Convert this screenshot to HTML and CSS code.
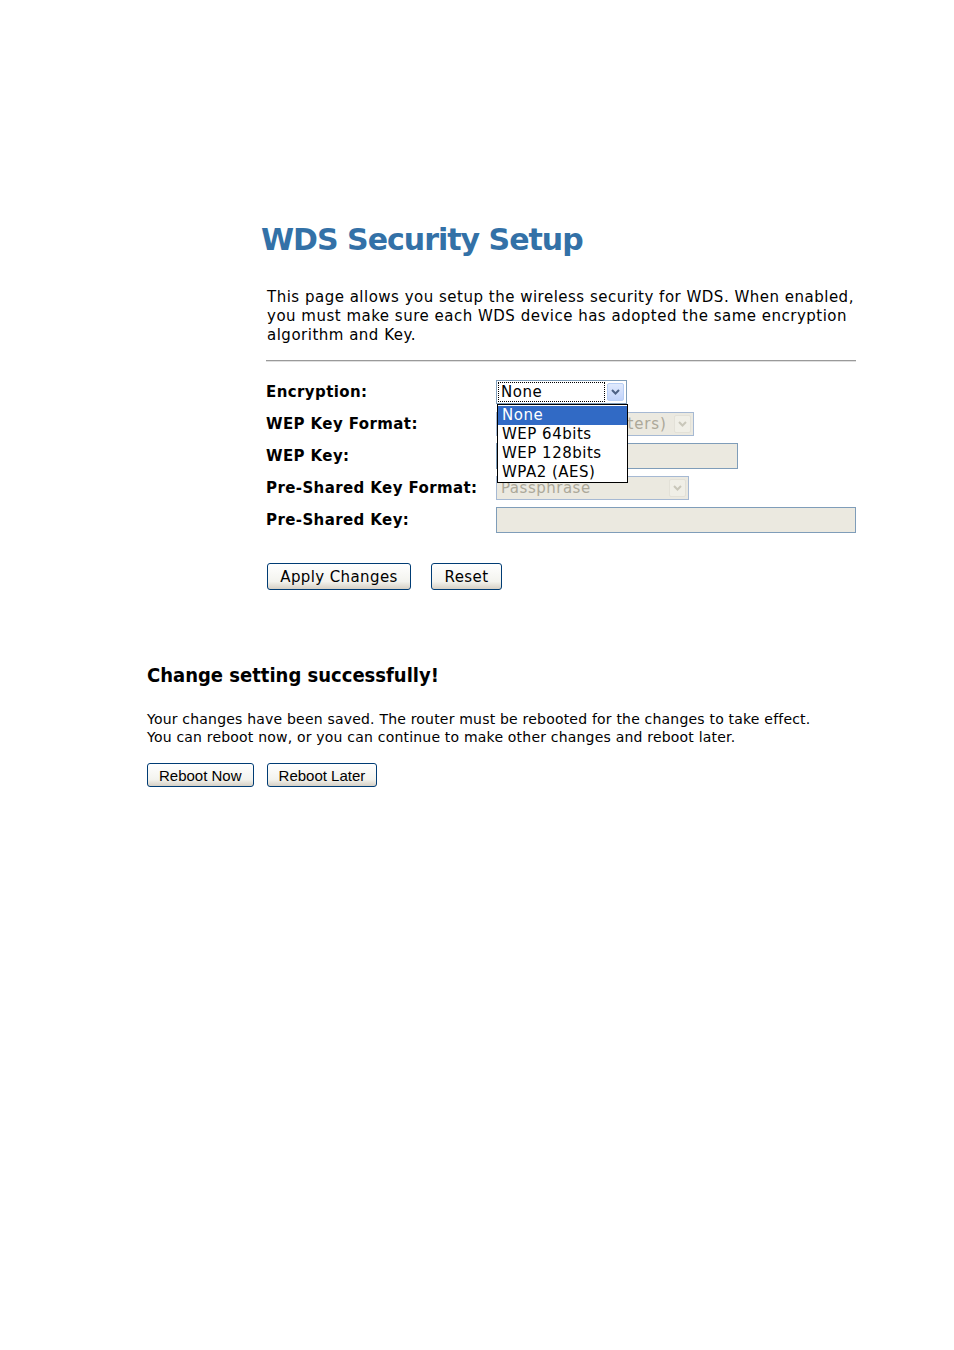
FILE: index.html
```html
<!DOCTYPE html>
<html>
<head>
<meta charset="utf-8">
<link rel="stylesheet" href="styles.css">
</head>
<body>
<div class="page">
  <section class="setup">
    <h1 class="title">WDS Security Setup</h1>
    <p class="intro">This page allows you setup the wireless security for WDS. When enabled, you must make sure each WDS device has adopted the same encryption algorithm and Key.</p>
    <div class="rule"></div>
    <div class="form">
      <div class="label">Encryption:</div>
      <div class="field">
        <div class="select enc">
          <span class="value focus">None</span>
          <span class="arrow"><svg width="9" height="6" viewBox="0 0 9 6"><path d="M1 1 L4.5 4.5 L8 1" fill="none" stroke="#4d6185" stroke-width="2"/></svg></span>
          <div class="menu">
            <div class="opt sel">None</div>
            <div class="opt">WEP 64bits</div>
            <div class="opt">WEP 128bits</div>
            <div class="opt">WPA2 (AES)</div>
          </div>
        </div>
      </div>
      <div class="label">WEP Key Format:</div>
      <div class="field">
        <div class="select disabled wepfmt">
          <span class="value">ASCII (5 characters)</span>
          <span class="arrow"><svg width="9" height="6" viewBox="0 0 9 6"><path d="M1 1 L4.5 4.5 L8 1" fill="none" stroke="#c9c7ba" stroke-width="2"/></svg></span>
        </div>
      </div>
      <div class="label">WEP Key:</div>
      <div class="field"><div class="input disabled wepkey"></div></div>
      <div class="label">Pre-Shared Key Format:</div>
      <div class="field">
        <div class="select disabled pskfmt">
          <span class="value">Passphrase</span>
          <span class="arrow"><svg width="9" height="6" viewBox="0 0 9 6"><path d="M1 1 L4.5 4.5 L8 1" fill="none" stroke="#c9c7ba" stroke-width="2"/></svg></span>
        </div>
      </div>
      <div class="label">Pre-Shared Key:</div>
      <div class="field"><div class="input disabled pskkey"></div></div>
    </div>
    <div class="buttons">
      <button class="btn apply">Apply Changes</button>
      <button class="btn reset">Reset</button>
    </div>
  </section>
  <section class="result">
    <h2 class="result-title">Change setting successfully!</h2>
    <p class="result-text">Your changes have been saved. The router must be rebooted for the changes to take effect.<br>You can reboot now, or you can continue to make other changes and reboot later.</p>
    <div class="buttons2">
      <button class="btn2">Reboot Now</button>
      <button class="btn2">Reboot Later</button>
    </div>
  </section>
</div>
</body>
</html>
```
FILE: styles.css
```css
html, body { margin: 0; padding: 0; background: #fff; }
body { font-family: "DejaVu Sans", Verdana, sans-serif; color: #000; }
.page { padding-top: 220px; }
.setup { margin-left: 261px; width: 595px; }
.title { margin: 0; font-size: 30px; font-weight: bold; color: #3371a7; line-height: 40px; letter-spacing: -1px; }
.intro { margin: 28px 0 0 6px; font-size: 15px; line-height: 19px; letter-spacing: 0.5px; }
.rule { margin: 15px 0 0 5px; height: 0; border-top: 1px solid #9a9a9a; border-bottom: 1px solid #e0e0e0; }
.form { margin: 14px 0 0 5px; display: grid; grid-template-columns: 230px 1fr; grid-auto-rows: 32px; align-items: center; }
.label { font-size: 15px; font-weight: bold; letter-spacing: 0.4px; }
.field { position: relative; height: 100%; display: flex; align-items: center; }
.select { position: relative; box-sizing: border-box; height: 24px; border: 1px solid #7f9db9; background: #fff; display: flex; align-items: center; font-size: 15px; }
.select .value { flex: 1; padding-left: 4px; white-space: nowrap; overflow: hidden; line-height: 20px; letter-spacing: 0.5px; }
.select .value.focus { margin: 1px 2px 1px 1px; padding-left: 3px; outline: 1px dotted #000; outline-offset: -1px; }
.wepfmt .value { letter-spacing: 0.8px; }
.arrow { width: 17px; height: 18px; margin-right: 2px; box-sizing: border-box; border: 1px solid #b8cff5; border-radius: 2px; background: linear-gradient(#e0eafd, #c1d3fb); display: flex; align-items: center; justify-content: center; flex: none; }
.enc { width: 131px; }
.wepfmt { width: 198px; }
.pskfmt { width: 193px; }
.disabled { background: #ebe9e0; color: #aca899; border-color: #a6b9d3; }
.disabled .arrow { background: #f0efe7; border-color: #e3e1d8; }
.input { box-sizing: border-box; height: 26px; border: 1px solid #7f9db9; }
.wepkey { width: 242px; }
.pskkey { width: 360px; }
.menu { position: absolute; left: 0; top: 23px; width: 131px; box-sizing: border-box; border: 1px solid #000; background: #fff; z-index: 5; padding-top: 1px; }
.opt { font-size: 15px; line-height: 19px; padding-left: 4px; color: #000; letter-spacing: 0.5px; }
.opt.sel { background: #316ac5; color: #fff; }
.buttons { margin: 27px 0 0 6px; display: flex; gap: 20px; }
.btn { font-family: "DejaVu Sans", Verdana, sans-serif; font-size: 15px; height: 27px; padding: 0 10px; border: 1px solid #003c74; border-radius: 3px; background: linear-gradient(#ffffff, #f3f3ee 70%, #d6d0c5); color: #000; letter-spacing: 0.4px; }
.apply { width: 144px; }
.reset { width: 71px; }
.result { margin: 73px 0 0 147px; }
.result-title { margin: 0; font-size: 20px; font-weight: bold; line-height: 24px; font-family: "DejaVu Sans Condensed", "DejaVu Sans", sans-serif; }
.result-text { margin: 23px 0 0 0; font-size: 14px; line-height: 18px; letter-spacing: 0.2px; }
.buttons2 { margin-top: 17px; display: flex; gap: 13px; }
.btn2 { font-family: "Liberation Sans", Arial, sans-serif; font-size: 15px; height: 24px; padding: 0 11px; border: 1px solid #003c74; border-radius: 3px; background: linear-gradient(#ffffff, #f3f3ee 70%, #d6d0c5); color: #000; }
```
